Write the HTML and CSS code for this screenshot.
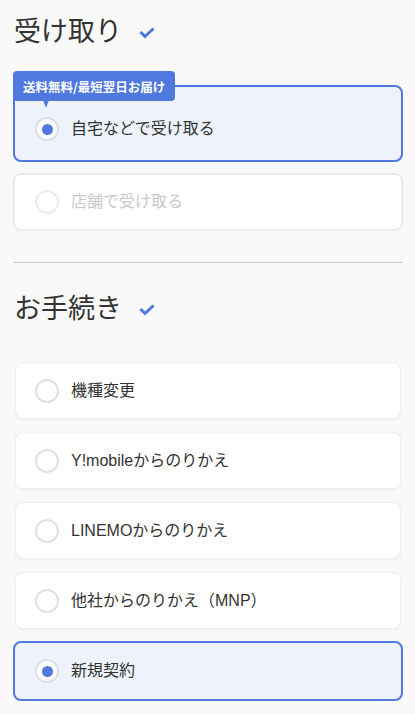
FILE: index.html
```html
<!DOCTYPE html>
<html lang="ja">
<head>
<meta charset="utf-8">
<title>受け取り・お手続き</title>
<link rel="stylesheet" href="styles.css">
</head>
<body>
<main class="page">
  <section class="section section--receive">
    <h2 class="section-title">受け取り<svg class="check" width="16" height="12" viewBox="0 0 16 12"><polyline points="1.5,5 6,9.5 14.5,1.5" fill="none" stroke="#4a78df" stroke-width="3"/></svg></h2>
    <div class="options options--receive">
      <div class="option option--thick option--selected option--badged">
        <span class="badge">送料無料/最短翌日お届け</span>
        <span class="radio radio--on"></span>
        <span class="option-label">自宅などで受け取る</span>
      </div>
      <div class="option option--thick option--disabled">
        <span class="radio radio--disabled"></span>
        <span class="option-label">店舗で受け取る</span>
      </div>
    </div>
  </section>

  <hr class="divider">

  <section class="section section--procedure">
    <h2 class="section-title">お手続き<svg class="check" width="16" height="12" viewBox="0 0 16 12"><polyline points="1.5,5 6,9.5 14.5,1.5" fill="none" stroke="#4a78df" stroke-width="3"/></svg></h2>
    <div class="options options--procedure">
      <div class="option option--plain">
        <span class="radio"></span>
        <span class="option-label">機種変更</span>
      </div>
      <div class="option option--plain">
        <span class="radio"></span>
        <span class="option-label">Y!mobileからのりかえ</span>
      </div>
      <div class="option option--plain">
        <span class="radio"></span>
        <span class="option-label">LINEMOからのりかえ</span>
      </div>
      <div class="option option--plain">
        <span class="radio"></span>
        <span class="option-label">他社からのりかえ（MNP）</span>
      </div>
      <div class="option option--thick option--selected option--last">
        <span class="radio radio--on"></span>
        <span class="option-label">新規契約</span>
      </div>
    </div>
  </section>
</main>
</body>
</html>
```

FILE: styles.css
```css
* {
  box-sizing: border-box;
}

html,
body {
  margin: 0;
  padding: 0;
  background: #f9f9f9;
}

body {
  font-family: "Liberation Sans", "Noto Sans CJK JP", sans-serif;
  color: #333333;
  overflow: hidden;
}

.page {
  padding: 14px 12px 0 13px;
}

.section-title {
  display: flex;
  align-items: center;
  margin: 0;
  height: 36px;
  font-size: 27px;
  font-weight: 400;
  line-height: 36px;
  color: #333333;
  padding-left: 1px;
}

.check {
  display: block;
  margin-left: 17px;
  margin-top: 1px;
}

.options {
  display: flex;
  flex-direction: column;
}

.options--receive {
  margin-top: 35px;
  gap: 11px;
}

.options--procedure {
  margin-top: 35px;
  gap: 13px;
}

.option {
  position: relative;
  display: flex;
  align-items: center;
  gap: 12px;
  background: #ffffff;
  border-radius: 8px;
}

.option--thick {
  border: 2px solid #ececec;
  padding-left: 20px;
  height: 58px;
}

.option--plain {
  margin: 0 2px;
  height: 57px;
  border: 1px solid #efefef;
  padding-left: 19px;
  box-shadow: 0 1px 3px rgba(0, 0, 0, 0.05);
}

.option--selected {
  border-color: #5079e0;
  background: #eef2fd;
}

.option--last {
  height: 60px;
  margin-top: -1px;
}

.option--badged {
  height: auto;
  padding-top: 30px;
  padding-bottom: 19px;
}

.badge {
  position: absolute;
  left: -2px;
  top: -16px;
  height: 30px;
  padding: 0 10px 0 10px;
  display: flex;
  align-items: center;
  background: #5079e0;
  color: #ffffff;
  font-family: "Noto Sans CJK JP", sans-serif;
  font-size: 12.5px;
  font-weight: 700;
  border-radius: 4px;
  white-space: nowrap;
}

.badge::after {
  content: "";
  position: absolute;
  left: 30px;
  top: 29px;
  border-left: 3.5px solid transparent;
  border-right: 3.5px solid transparent;
  border-top: 8px solid #5079e0;
}

.radio {
  position: relative;
  flex-shrink: 0;
  width: 24px;
  height: 24px;
  border-radius: 50%;
  border: 2px solid #dde1e7;
  background: #ffffff;
  display: grid;
  place-items: center;
}

.radio--on::after {
  content: "";
  width: 11px;
  height: 11px;
  border-radius: 50%;
  background: #5079e0;
}

.radio--disabled {
  border-color: #ebebeb;
}

.option-label {
  font-size: 16px;
  line-height: 24px;
  color: #333333;
}

.option--disabled .option-label {
  color: #c8c8c8;
}

.divider {
  margin: 31px 0 0;
  border: 0;
  border-top: 1px solid #cccccc;
  height: 0;
}

.section--procedure {
  margin-top: 28px;
}
```
